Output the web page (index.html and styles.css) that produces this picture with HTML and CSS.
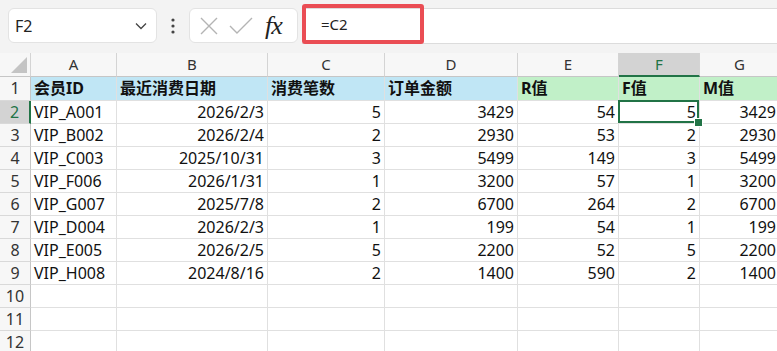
FILE: index.html
```html
<!DOCTYPE html>
<html lang="zh-CN">
<head>
    <meta charset="UTF-8">
    <title>RFM</title>
    <link rel="stylesheet" href="styles.css">
</head>
<body>
    <div class="toolbar">
        <div class="namebox">
            <span>F2</span>
            <svg class="chevron" width="14" height="14" viewBox="0 0 14 14"><path d="M2 4.5 L7 9.5 L12 4.5" fill="none" stroke="#444" stroke-width="1.3"/></svg>
        </div>
        <div class="dots">
            <svg width="4" height="16" viewBox="0 0 4 16"><circle cx="2" cy="2" r="1.6" fill="#444"/><circle cx="2" cy="8" r="1.6" fill="#444"/><circle cx="2" cy="14" r="1.6" fill="#444"/></svg>
        </div>
        <div class="fxbox">
            <svg width="20" height="20" viewBox="0 0 20 20"><path d="M2 2 L18 18 M18 2 L2 18" stroke="#b4b4b4" stroke-width="1.4"/></svg>
            <svg width="24" height="20" viewBox="0 0 24 20"><path d="M1 10 L8 17 L23 2" fill="none" stroke="#b4b4b4" stroke-width="1.4"/></svg>
            <span class="fx">fx</span>
        </div>
        <div class="formula">
            <div class="formula-mark">=C2</div>
        </div>
    </div>

    <div class="sheet">
        <div class="corner"><span class="tri"></span></div>
        <div class="colhead">A</div>
        <div class="colhead">B</div>
        <div class="colhead">C</div>
        <div class="colhead">D</div>
        <div class="colhead">E</div>
        <div class="colhead active">F</div>
        <div class="colhead">G</div>
        <div class="colhead"></div>

        <div class="rowhead">1</div>
        <div class="cell blue bold">会员ID</div>
        <div class="cell blue bold">最近消费日期</div>
        <div class="cell blue bold">消费笔数</div>
        <div class="cell blue bold">订单金额</div>
        <div class="cell green bold">R值</div>
        <div class="cell green bold">F值</div>
        <div class="cell green bold">M值</div>
        <div class="cell green"></div>

        <div class="rowhead active">2</div>
        <div class="cell">VIP_A001</div><div class="cell num">2026/2/3</div><div class="cell num">5</div><div class="cell num">3429</div><div class="cell num">54</div><div class="cell num selected">5</div><div class="cell num">3429</div><div class="cell"></div>

        <div class="rowhead">3</div>
        <div class="cell">VIP_B002</div><div class="cell num">2026/2/4</div><div class="cell num">2</div><div class="cell num">2930</div><div class="cell num">53</div><div class="cell num">2</div><div class="cell num">2930</div><div class="cell"></div>

        <div class="rowhead">4</div>
        <div class="cell">VIP_C003</div><div class="cell num">2025/10/31</div><div class="cell num">3</div><div class="cell num">5499</div><div class="cell num">149</div><div class="cell num">3</div><div class="cell num">5499</div><div class="cell"></div>

        <div class="rowhead">5</div>
        <div class="cell">VIP_F006</div><div class="cell num">2026/1/31</div><div class="cell num">1</div><div class="cell num">3200</div><div class="cell num">57</div><div class="cell num">1</div><div class="cell num">3200</div><div class="cell"></div>

        <div class="rowhead">6</div>
        <div class="cell">VIP_G007</div><div class="cell num">2025/7/8</div><div class="cell num">2</div><div class="cell num">6700</div><div class="cell num">264</div><div class="cell num">2</div><div class="cell num">6700</div><div class="cell"></div>

        <div class="rowhead">7</div>
        <div class="cell">VIP_D004</div><div class="cell num">2026/2/3</div><div class="cell num">1</div><div class="cell num">199</div><div class="cell num">54</div><div class="cell num">1</div><div class="cell num">199</div><div class="cell"></div>

        <div class="rowhead">8</div>
        <div class="cell">VIP_E005</div><div class="cell num">2026/2/5</div><div class="cell num">5</div><div class="cell num">2200</div><div class="cell num">52</div><div class="cell num">5</div><div class="cell num">2200</div><div class="cell"></div>

        <div class="rowhead">9</div>
        <div class="cell">VIP_H008</div><div class="cell num">2024/8/16</div><div class="cell num">2</div><div class="cell num">1400</div><div class="cell num">590</div><div class="cell num">2</div><div class="cell num">1400</div><div class="cell"></div>

        <div class="rowhead">10</div>
        <div class="cell"></div><div class="cell"></div><div class="cell"></div><div class="cell"></div><div class="cell"></div><div class="cell"></div><div class="cell"></div><div class="cell"></div>

        <div class="rowhead">11</div>
        <div class="cell"></div><div class="cell"></div><div class="cell"></div><div class="cell"></div><div class="cell"></div><div class="cell"></div><div class="cell"></div><div class="cell"></div>

        <div class="rowhead">12</div>
        <div class="cell"></div><div class="cell"></div><div class="cell"></div><div class="cell"></div><div class="cell"></div><div class="cell"></div><div class="cell"></div><div class="cell"></div>
    </div>
</body>
</html>
```

FILE: styles.css
```css
body {
    margin: 0;
    width: 777px;
    height: 351px;
    overflow: hidden;
    background-color: #ffffff;
    font-family: 'Noto Sans', 'Noto Sans CJK SC', sans-serif;
    color: #111;
}
.toolbar {
    height: 53px;
    box-sizing: border-box;
    padding-top: 8px;
    background-color: #f3f3f3;
    display: flex;
    align-items: flex-start;
}
.namebox {
    margin-left: 8px;
    width: 149px;
    height: 35px;
    box-sizing: border-box;
    background-color: #fff;
    border: 1px solid #e3e3e3;
    border-radius: 6px;
    display: flex;
    align-items: center;
    justify-content: space-between;
    padding: 0 8px 0 6px;
    font-size: 16px;
    color: #222;
}
.dots {
    width: 32px;
    height: 35px;
    display: flex;
    align-items: center;
    justify-content: center;
}
.fxbox {
    width: 109px;
    height: 35px;
    box-sizing: border-box;
    background-color: #fff;
    border: 1px solid #e3e3e3;
    border-radius: 6px;
    display: flex;
    align-items: center;
    gap: 10px;
    padding-left: 9px;
}
.fx {
    font-family: 'Liberation Serif', serif;
    font-style: italic;
    font-size: 26px;
    line-height: 30px;
    color: #222;
    margin-left: 2px;
    letter-spacing: -1px;
}
.formula {
    position: relative;
    margin-left: 4px;
    flex: 1;
    height: 36px;
    box-sizing: border-box;
    background-color: #fff;
    border-top: 1px solid #dcdcdc;
    border-bottom: 1px solid #dcdcdc;
}
.formula-mark {
    position: absolute;
    left: 0;
    top: -5px;
    width: 122px;
    height: 40px;
    box-sizing: border-box;
    border: 4px solid #ea4d54;
    border-radius: 3px;
    padding-left: 15px;
    font-size: 15px;
    line-height: 32px;
    color: #222;
}
.sheet {
    display: grid;
    grid-template-columns: 31px 86px 151px 117px 133px 101px 81px 80px 20px;
    grid-template-rows: 24px 24px repeat(11, 23px);
    font-size: 16px;
}
.corner {
    position: relative;
    background-color: #f7f7f7;
    border-right: 1px solid #d4d4d4;
    border-bottom: 1px solid #c6c6c6;
}
.tri {
    position: absolute;
    right: 3px;
    bottom: 3px;
    width: 0;
    height: 0;
    border-left: 16px solid transparent;
    border-bottom: 16px solid #c4c4c4;
}
.colhead {
    box-sizing: border-box;
    background-color: #f7f7f7;
    border-right: 1px solid #d4d4d4;
    border-bottom: 1px solid #c6c6c6;
    text-align: center;
    font-size: 15px;
    line-height: 23px;
    color: #333;
}
.colhead.active {
    background-color: #d3d3d3;
    border-bottom: 2px solid #217346;
    color: #217346;
}
.rowhead {
    box-sizing: border-box;
    background-color: #f7f7f7;
    border-right: 1px solid #c6c6c6;
    border-bottom: 1px solid #d9d9d9;
    text-align: center;
    font-size: 16px;
    line-height: 22px;
    color: #333;
}
.rowhead.active {
    background-color: #d3d3d3;
    border-right: 2px solid #217346;
    color: #217346;
}
.cell {
    box-sizing: border-box;
    border-right: 1px solid #e0e0e0;
    border-bottom: 1px solid #e0e0e0;
    padding: 0 3px;
    line-height: 22px;
    white-space: nowrap;
    overflow: hidden;
}
.cell.num {
    text-align: right;
}
.cell.bold {
    font-weight: bold;
}
.cell.blue {
    background-color: #c0e6f5;
}
.cell.green {
    background-color: #c1f0c8;
}
.cell.selected {
    position: relative;
    overflow: visible;
}
.cell.selected::after {
    content: "";
    position: absolute;
    left: -1px;
    top: -1px;
    right: 0;
    bottom: 0;
    border: 2px solid #217346;
}
.cell.selected::before {
    content: "";
    position: absolute;
    right: -4px;
    bottom: -4px;
    width: 7px;
    height: 7px;
    background-color: #217346;
    border: 1px solid #fff;
    z-index: 1;
}
```
